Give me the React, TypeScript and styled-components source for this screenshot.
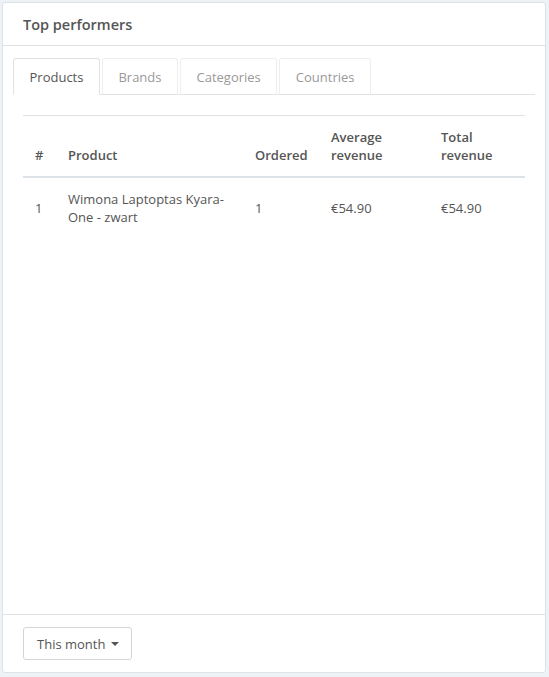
import React, { useState } from 'react';
import styled, { createGlobalStyle } from 'styled-components';

const GlobalStyle = createGlobalStyle`
  html, body {
    margin: 0;
    padding: 0;
    background: #edf2f6;
  }
  body {
    font-family: "Open Sans", "Liberation Sans", Arial, sans-serif;
    font-size: 13px;
    color: #555;
  }
`

const Page = styled.div`
  padding: 2px 3px 4px 2px;
  height: 677px;
  box-sizing: border-box;
  display: flex;
`

const Card = styled.div`
  flex: 1;
  display: flex;
  flex-direction: column;
  background: #fff;
  border: 1px solid #dde2e6;
  border-radius: 3px;
`

const CardHeader = styled.div`
  height: 42px;
  padding: 0 20px;
  display: flex;
  align-items: center;
  border-bottom: 1px solid #dde2e6;
  font-size: 14.5px;
  font-weight: 600;
  color: #555;
`

const CardBody = styled.div`
  flex: 1;
  padding: 12px 10px 0;
`

const TabList = styled.div`
  display: flex;
  gap: 2px;
  border-bottom: 1px solid #e2e2e2;
`

const Tab = styled.button<{ $active?: boolean }>`
  font: inherit;
  height: 37px;
  margin-bottom: -1px;
  padding: 0 15.5px;
  background: #fff;
  border: 1px solid ${p => (p.$active ? '#e2e2e2' : '#eeeeee')};
  border-bottom-color: ${p => (p.$active ? '#fff' : '#e2e2e2')};
  border-radius: 3px 3px 0 0;
  color: ${p => (p.$active ? '#555' : '#999')};
  cursor: pointer;
`

const TabPanel = styled.div`
  padding: 20px 10px;
`

const Table = styled.table`
  width: 100%;
  border-collapse: collapse;
  table-layout: fixed;
  border-top: 1px solid #dde2e6;
`

const Th = styled.th`
  text-align: left;
  vertical-align: bottom;
  padding: 12px;
  line-height: 18px;
  font-weight: 600;
  color: #555;
  border-bottom: 2px solid #dde2e6;
`

const Td = styled.td`
  text-align: left;
  vertical-align: middle;
  padding: 12px;
  line-height: 18px;
  color: #555;
`

const CardFooter = styled.div`
  border-top: 1px solid #dde2e6;
  padding: 12px 20px 12px;
`

const PeriodButton = styled.button`
  font: inherit;
  height: 33px;
  padding: 0 12px 0 13px;
  display: inline-flex;
  align-items: center;
  gap: 6px;
  background: #fff;
  border: 1px solid #d2d6da;
  border-radius: 3px;
  color: #555;
  font-size: 13px;
`

const Caret = styled.span`
  width: 0;
  height: 0;
  border-left: 4px solid transparent;
  border-right: 4px solid transparent;
  border-top: 4px solid #555;
`

const tabs = ['Products', 'Brands', 'Categories', 'Countries'];

const rows = [
  { rank: 1, name: 'Wimona Laptoptas Kyara-One - zwart', ordered: 1, average: '€54.90', total: '€54.90' },
];

const App: React.FC = () => {
  const [active, setActive] = useState('Products');

  return (
    <>
      <GlobalStyle />
      <Page>
        <Card>
          <CardHeader>Top performers</CardHeader>
          <CardBody>
            <TabList>
              {tabs.map(t => (
                <Tab key={t} $active={t === active} onClick={() => setActive(t)}>
                  {t}
                </Tab>
              ))}
            </TabList>
            <TabPanel>
              <Table>
                <colgroup>
                  <col style={{ width: 33 }} />
                  <col style={{ width: 187 }} />
                  <col style={{ width: 76 }} />
                  <col style={{ width: 110 }} />
                  <col />
                </colgroup>
                <thead>
                  <tr>
                    <Th>#</Th>
                    <Th>Product</Th>
                    <Th>Ordered</Th>
                    <Th>Average revenue</Th>
                    <Th>Total revenue</Th>
                  </tr>
                </thead>
                <tbody>
                  {rows.map(r => (
                    <tr key={r.rank}>
                      <Td>{r.rank}</Td>
                      <Td>{r.name}</Td>
                      <Td>{r.ordered}</Td>
                      <Td>{r.average}</Td>
                      <Td>{r.total}</Td>
                    </tr>
                  ))}
                </tbody>
              </Table>
            </TabPanel>
          </CardBody>
          <CardFooter>
            <PeriodButton>
              This month <Caret />
            </PeriodButton>
          </CardFooter>
        </Card>
      </Page>
    </>
  );
};

export default App;
